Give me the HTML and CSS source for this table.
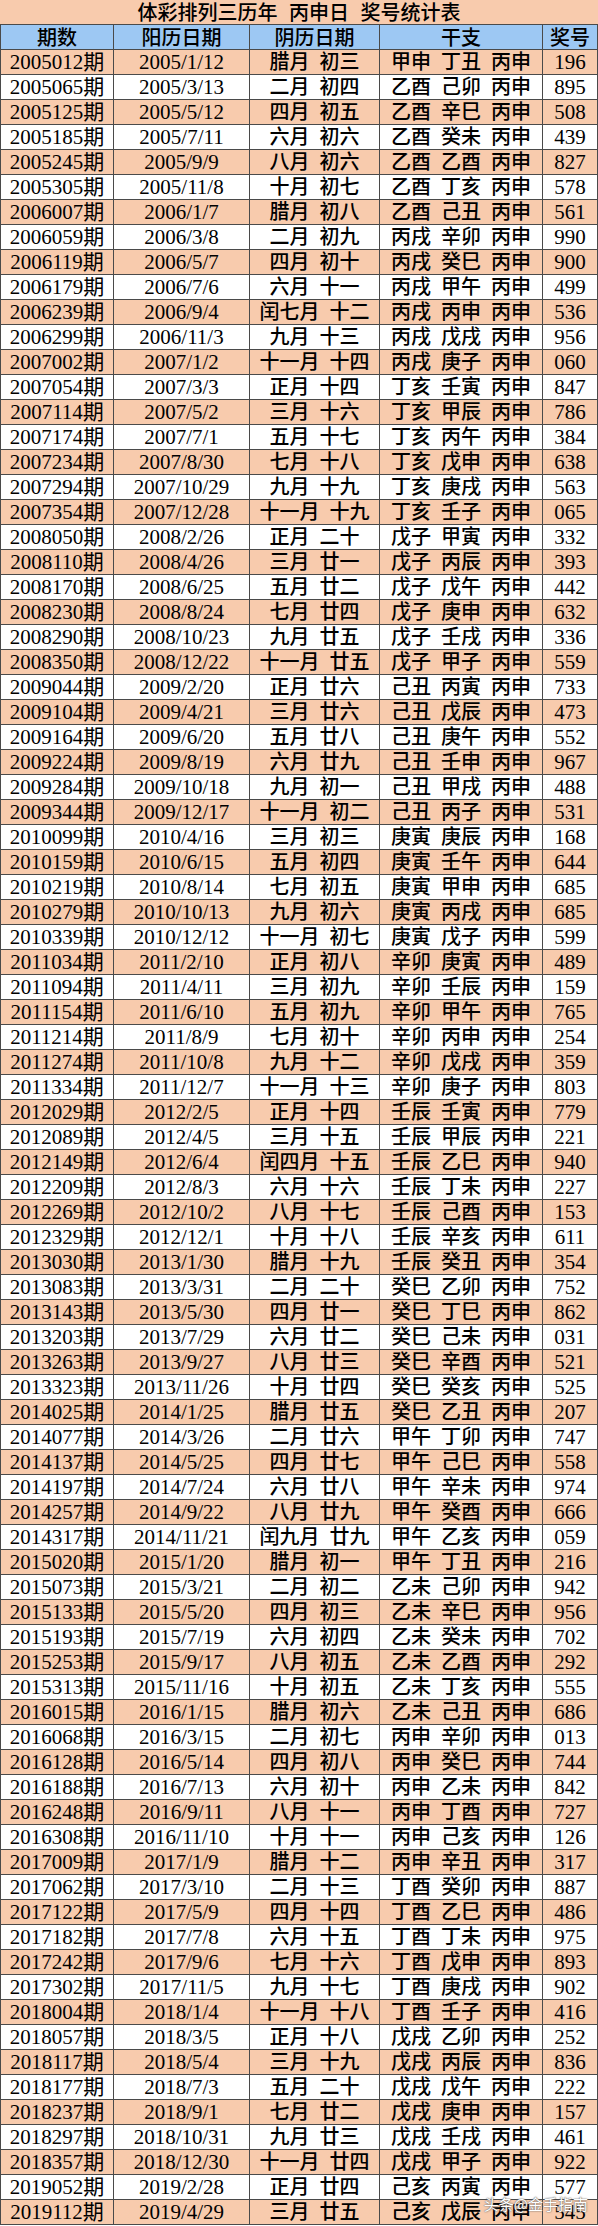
FILE: index.html
```html
<!DOCTYPE html>
<html lang="zh-CN">
<head>
<meta charset="utf-8">
<title>体彩排列三历年 丙申日 奖号统计表</title>
<link rel="stylesheet" href="styles.css">
</head>
<body>
<div class="sheet">
  <div class="title">体彩排列三历年 丙申日 奖号统计表</div>
  <div class="row head"><div class="c">期数</div><div class="c">阳历日期</div><div class="c">阴历日期</div><div class="c">干支</div><div class="c">奖号</div></div>
  <div class="row odd"><div class="c n">2005012期</div><div class="c n">2005/1/12</div><div class="c z">腊月 初三</div><div class="c z">甲申 丁丑 丙申</div><div class="c n">196</div></div>
  <div class="row"><div class="c n">2005065期</div><div class="c n">2005/3/13</div><div class="c z">二月 初四</div><div class="c z">乙酉 己卯 丙申</div><div class="c n">895</div></div>
  <div class="row odd"><div class="c n">2005125期</div><div class="c n">2005/5/12</div><div class="c z">四月 初五</div><div class="c z">乙酉 辛巳 丙申</div><div class="c n">508</div></div>
  <div class="row"><div class="c n">2005185期</div><div class="c n">2005/7/11</div><div class="c z">六月 初六</div><div class="c z">乙酉 癸未 丙申</div><div class="c n">439</div></div>
  <div class="row odd"><div class="c n">2005245期</div><div class="c n">2005/9/9</div><div class="c z">八月 初六</div><div class="c z">乙酉 乙酉 丙申</div><div class="c n">827</div></div>
  <div class="row"><div class="c n">2005305期</div><div class="c n">2005/11/8</div><div class="c z">十月 初七</div><div class="c z">乙酉 丁亥 丙申</div><div class="c n">578</div></div>
  <div class="row odd"><div class="c n">2006007期</div><div class="c n">2006/1/7</div><div class="c z">腊月 初八</div><div class="c z">乙酉 己丑 丙申</div><div class="c n">561</div></div>
  <div class="row"><div class="c n">2006059期</div><div class="c n">2006/3/8</div><div class="c z">二月 初九</div><div class="c z">丙戌 辛卯 丙申</div><div class="c n">990</div></div>
  <div class="row odd"><div class="c n">2006119期</div><div class="c n">2006/5/7</div><div class="c z">四月 初十</div><div class="c z">丙戌 癸巳 丙申</div><div class="c n">900</div></div>
  <div class="row"><div class="c n">2006179期</div><div class="c n">2006/7/6</div><div class="c z">六月 十一</div><div class="c z">丙戌 甲午 丙申</div><div class="c n">499</div></div>
  <div class="row odd"><div class="c n">2006239期</div><div class="c n">2006/9/4</div><div class="c z">闰七月 十二</div><div class="c z">丙戌 丙申 丙申</div><div class="c n">536</div></div>
  <div class="row"><div class="c n">2006299期</div><div class="c n">2006/11/3</div><div class="c z">九月 十三</div><div class="c z">丙戌 戊戌 丙申</div><div class="c n">956</div></div>
  <div class="row odd"><div class="c n">2007002期</div><div class="c n">2007/1/2</div><div class="c z">十一月 十四</div><div class="c z">丙戌 庚子 丙申</div><div class="c n">060</div></div>
  <div class="row"><div class="c n">2007054期</div><div class="c n">2007/3/3</div><div class="c z">正月 十四</div><div class="c z">丁亥 壬寅 丙申</div><div class="c n">847</div></div>
  <div class="row odd"><div class="c n">2007114期</div><div class="c n">2007/5/2</div><div class="c z">三月 十六</div><div class="c z">丁亥 甲辰 丙申</div><div class="c n">786</div></div>
  <div class="row"><div class="c n">2007174期</div><div class="c n">2007/7/1</div><div class="c z">五月 十七</div><div class="c z">丁亥 丙午 丙申</div><div class="c n">384</div></div>
  <div class="row odd"><div class="c n">2007234期</div><div class="c n">2007/8/30</div><div class="c z">七月 十八</div><div class="c z">丁亥 戊申 丙申</div><div class="c n">638</div></div>
  <div class="row"><div class="c n">2007294期</div><div class="c n">2007/10/29</div><div class="c z">九月 十九</div><div class="c z">丁亥 庚戌 丙申</div><div class="c n">563</div></div>
  <div class="row odd"><div class="c n">2007354期</div><div class="c n">2007/12/28</div><div class="c z">十一月 十九</div><div class="c z">丁亥 壬子 丙申</div><div class="c n">065</div></div>
  <div class="row"><div class="c n">2008050期</div><div class="c n">2008/2/26</div><div class="c z">正月 二十</div><div class="c z">戊子 甲寅 丙申</div><div class="c n">332</div></div>
  <div class="row odd"><div class="c n">2008110期</div><div class="c n">2008/4/26</div><div class="c z">三月 廿一</div><div class="c z">戊子 丙辰 丙申</div><div class="c n">393</div></div>
  <div class="row"><div class="c n">2008170期</div><div class="c n">2008/6/25</div><div class="c z">五月 廿二</div><div class="c z">戊子 戊午 丙申</div><div class="c n">442</div></div>
  <div class="row odd"><div class="c n">2008230期</div><div class="c n">2008/8/24</div><div class="c z">七月 廿四</div><div class="c z">戊子 庚申 丙申</div><div class="c n">632</div></div>
  <div class="row"><div class="c n">2008290期</div><div class="c n">2008/10/23</div><div class="c z">九月 廿五</div><div class="c z">戊子 壬戌 丙申</div><div class="c n">336</div></div>
  <div class="row odd"><div class="c n">2008350期</div><div class="c n">2008/12/22</div><div class="c z">十一月 廿五</div><div class="c z">戊子 甲子 丙申</div><div class="c n">559</div></div>
  <div class="row"><div class="c n">2009044期</div><div class="c n">2009/2/20</div><div class="c z">正月 廿六</div><div class="c z">己丑 丙寅 丙申</div><div class="c n">733</div></div>
  <div class="row odd"><div class="c n">2009104期</div><div class="c n">2009/4/21</div><div class="c z">三月 廿六</div><div class="c z">己丑 戊辰 丙申</div><div class="c n">473</div></div>
  <div class="row"><div class="c n">2009164期</div><div class="c n">2009/6/20</div><div class="c z">五月 廿八</div><div class="c z">己丑 庚午 丙申</div><div class="c n">552</div></div>
  <div class="row odd"><div class="c n">2009224期</div><div class="c n">2009/8/19</div><div class="c z">六月 廿九</div><div class="c z">己丑 壬申 丙申</div><div class="c n">967</div></div>
  <div class="row"><div class="c n">2009284期</div><div class="c n">2009/10/18</div><div class="c z">九月 初一</div><div class="c z">己丑 甲戌 丙申</div><div class="c n">488</div></div>
  <div class="row odd"><div class="c n">2009344期</div><div class="c n">2009/12/17</div><div class="c z">十一月 初二</div><div class="c z">己丑 丙子 丙申</div><div class="c n">531</div></div>
  <div class="row"><div class="c n">2010099期</div><div class="c n">2010/4/16</div><div class="c z">三月 初三</div><div class="c z">庚寅 庚辰 丙申</div><div class="c n">168</div></div>
  <div class="row odd"><div class="c n">2010159期</div><div class="c n">2010/6/15</div><div class="c z">五月 初四</div><div class="c z">庚寅 壬午 丙申</div><div class="c n">644</div></div>
  <div class="row"><div class="c n">2010219期</div><div class="c n">2010/8/14</div><div class="c z">七月 初五</div><div class="c z">庚寅 甲申 丙申</div><div class="c n">685</div></div>
  <div class="row odd"><div class="c n">2010279期</div><div class="c n">2010/10/13</div><div class="c z">九月 初六</div><div class="c z">庚寅 丙戌 丙申</div><div class="c n">685</div></div>
  <div class="row"><div class="c n">2010339期</div><div class="c n">2010/12/12</div><div class="c z">十一月 初七</div><div class="c z">庚寅 戊子 丙申</div><div class="c n">599</div></div>
  <div class="row odd"><div class="c n">2011034期</div><div class="c n">2011/2/10</div><div class="c z">正月 初八</div><div class="c z">辛卯 庚寅 丙申</div><div class="c n">489</div></div>
  <div class="row"><div class="c n">2011094期</div><div class="c n">2011/4/11</div><div class="c z">三月 初九</div><div class="c z">辛卯 壬辰 丙申</div><div class="c n">159</div></div>
  <div class="row odd"><div class="c n">2011154期</div><div class="c n">2011/6/10</div><div class="c z">五月 初九</div><div class="c z">辛卯 甲午 丙申</div><div class="c n">765</div></div>
  <div class="row"><div class="c n">2011214期</div><div class="c n">2011/8/9</div><div class="c z">七月 初十</div><div class="c z">辛卯 丙申 丙申</div><div class="c n">254</div></div>
  <div class="row odd"><div class="c n">2011274期</div><div class="c n">2011/10/8</div><div class="c z">九月 十二</div><div class="c z">辛卯 戊戌 丙申</div><div class="c n">359</div></div>
  <div class="row"><div class="c n">2011334期</div><div class="c n">2011/12/7</div><div class="c z">十一月 十三</div><div class="c z">辛卯 庚子 丙申</div><div class="c n">803</div></div>
  <div class="row odd"><div class="c n">2012029期</div><div class="c n">2012/2/5</div><div class="c z">正月 十四</div><div class="c z">壬辰 壬寅 丙申</div><div class="c n">779</div></div>
  <div class="row"><div class="c n">2012089期</div><div class="c n">2012/4/5</div><div class="c z">三月 十五</div><div class="c z">壬辰 甲辰 丙申</div><div class="c n">221</div></div>
  <div class="row odd"><div class="c n">2012149期</div><div class="c n">2012/6/4</div><div class="c z">闰四月 十五</div><div class="c z">壬辰 乙巳 丙申</div><div class="c n">940</div></div>
  <div class="row"><div class="c n">2012209期</div><div class="c n">2012/8/3</div><div class="c z">六月 十六</div><div class="c z">壬辰 丁未 丙申</div><div class="c n">227</div></div>
  <div class="row odd"><div class="c n">2012269期</div><div class="c n">2012/10/2</div><div class="c z">八月 十七</div><div class="c z">壬辰 己酉 丙申</div><div class="c n">153</div></div>
  <div class="row"><div class="c n">2012329期</div><div class="c n">2012/12/1</div><div class="c z">十月 十八</div><div class="c z">壬辰 辛亥 丙申</div><div class="c n">611</div></div>
  <div class="row odd"><div class="c n">2013030期</div><div class="c n">2013/1/30</div><div class="c z">腊月 十九</div><div class="c z">壬辰 癸丑 丙申</div><div class="c n">354</div></div>
  <div class="row"><div class="c n">2013083期</div><div class="c n">2013/3/31</div><div class="c z">二月 二十</div><div class="c z">癸巳 乙卯 丙申</div><div class="c n">752</div></div>
  <div class="row odd"><div class="c n">2013143期</div><div class="c n">2013/5/30</div><div class="c z">四月 廿一</div><div class="c z">癸巳 丁巳 丙申</div><div class="c n">862</div></div>
  <div class="row"><div class="c n">2013203期</div><div class="c n">2013/7/29</div><div class="c z">六月 廿二</div><div class="c z">癸巳 己未 丙申</div><div class="c n">031</div></div>
  <div class="row odd"><div class="c n">2013263期</div><div class="c n">2013/9/27</div><div class="c z">八月 廿三</div><div class="c z">癸巳 辛酉 丙申</div><div class="c n">521</div></div>
  <div class="row"><div class="c n">2013323期</div><div class="c n">2013/11/26</div><div class="c z">十月 廿四</div><div class="c z">癸巳 癸亥 丙申</div><div class="c n">525</div></div>
  <div class="row odd"><div class="c n">2014025期</div><div class="c n">2014/1/25</div><div class="c z">腊月 廿五</div><div class="c z">癸巳 乙丑 丙申</div><div class="c n">207</div></div>
  <div class="row"><div class="c n">2014077期</div><div class="c n">2014/3/26</div><div class="c z">二月 廿六</div><div class="c z">甲午 丁卯 丙申</div><div class="c n">747</div></div>
  <div class="row odd"><div class="c n">2014137期</div><div class="c n">2014/5/25</div><div class="c z">四月 廿七</div><div class="c z">甲午 己巳 丙申</div><div class="c n">558</div></div>
  <div class="row"><div class="c n">2014197期</div><div class="c n">2014/7/24</div><div class="c z">六月 廿八</div><div class="c z">甲午 辛未 丙申</div><div class="c n">974</div></div>
  <div class="row odd"><div class="c n">2014257期</div><div class="c n">2014/9/22</div><div class="c z">八月 廿九</div><div class="c z">甲午 癸酉 丙申</div><div class="c n">666</div></div>
  <div class="row"><div class="c n">2014317期</div><div class="c n">2014/11/21</div><div class="c z">闰九月 廿九</div><div class="c z">甲午 乙亥 丙申</div><div class="c n">059</div></div>
  <div class="row odd"><div class="c n">2015020期</div><div class="c n">2015/1/20</div><div class="c z">腊月 初一</div><div class="c z">甲午 丁丑 丙申</div><div class="c n">216</div></div>
  <div class="row"><div class="c n">2015073期</div><div class="c n">2015/3/21</div><div class="c z">二月 初二</div><div class="c z">乙未 己卯 丙申</div><div class="c n">942</div></div>
  <div class="row odd"><div class="c n">2015133期</div><div class="c n">2015/5/20</div><div class="c z">四月 初三</div><div class="c z">乙未 辛巳 丙申</div><div class="c n">956</div></div>
  <div class="row"><div class="c n">2015193期</div><div class="c n">2015/7/19</div><div class="c z">六月 初四</div><div class="c z">乙未 癸未 丙申</div><div class="c n">702</div></div>
  <div class="row odd"><div class="c n">2015253期</div><div class="c n">2015/9/17</div><div class="c z">八月 初五</div><div class="c z">乙未 乙酉 丙申</div><div class="c n">292</div></div>
  <div class="row"><div class="c n">2015313期</div><div class="c n">2015/11/16</div><div class="c z">十月 初五</div><div class="c z">乙未 丁亥 丙申</div><div class="c n">555</div></div>
  <div class="row odd"><div class="c n">2016015期</div><div class="c n">2016/1/15</div><div class="c z">腊月 初六</div><div class="c z">乙未 己丑 丙申</div><div class="c n">686</div></div>
  <div class="row"><div class="c n">2016068期</div><div class="c n">2016/3/15</div><div class="c z">二月 初七</div><div class="c z">丙申 辛卯 丙申</div><div class="c n">013</div></div>
  <div class="row odd"><div class="c n">2016128期</div><div class="c n">2016/5/14</div><div class="c z">四月 初八</div><div class="c z">丙申 癸巳 丙申</div><div class="c n">744</div></div>
  <div class="row"><div class="c n">2016188期</div><div class="c n">2016/7/13</div><div class="c z">六月 初十</div><div class="c z">丙申 乙未 丙申</div><div class="c n">842</div></div>
  <div class="row odd"><div class="c n">2016248期</div><div class="c n">2016/9/11</div><div class="c z">八月 十一</div><div class="c z">丙申 丁酉 丙申</div><div class="c n">727</div></div>
  <div class="row"><div class="c n">2016308期</div><div class="c n">2016/11/10</div><div class="c z">十月 十一</div><div class="c z">丙申 己亥 丙申</div><div class="c n">126</div></div>
  <div class="row odd"><div class="c n">2017009期</div><div class="c n">2017/1/9</div><div class="c z">腊月 十二</div><div class="c z">丙申 辛丑 丙申</div><div class="c n">317</div></div>
  <div class="row"><div class="c n">2017062期</div><div class="c n">2017/3/10</div><div class="c z">二月 十三</div><div class="c z">丁酉 癸卯 丙申</div><div class="c n">887</div></div>
  <div class="row odd"><div class="c n">2017122期</div><div class="c n">2017/5/9</div><div class="c z">四月 十四</div><div class="c z">丁酉 乙巳 丙申</div><div class="c n">486</div></div>
  <div class="row"><div class="c n">2017182期</div><div class="c n">2017/7/8</div><div class="c z">六月 十五</div><div class="c z">丁酉 丁未 丙申</div><div class="c n">975</div></div>
  <div class="row odd"><div class="c n">2017242期</div><div class="c n">2017/9/6</div><div class="c z">七月 十六</div><div class="c z">丁酉 戊申 丙申</div><div class="c n">893</div></div>
  <div class="row"><div class="c n">2017302期</div><div class="c n">2017/11/5</div><div class="c z">九月 十七</div><div class="c z">丁酉 庚戌 丙申</div><div class="c n">902</div></div>
  <div class="row odd"><div class="c n">2018004期</div><div class="c n">2018/1/4</div><div class="c z">十一月 十八</div><div class="c z">丁酉 壬子 丙申</div><div class="c n">416</div></div>
  <div class="row"><div class="c n">2018057期</div><div class="c n">2018/3/5</div><div class="c z">正月 十八</div><div class="c z">戊戌 乙卯 丙申</div><div class="c n">252</div></div>
  <div class="row odd"><div class="c n">2018117期</div><div class="c n">2018/5/4</div><div class="c z">三月 十九</div><div class="c z">戊戌 丙辰 丙申</div><div class="c n">836</div></div>
  <div class="row"><div class="c n">2018177期</div><div class="c n">2018/7/3</div><div class="c z">五月 二十</div><div class="c z">戊戌 戊午 丙申</div><div class="c n">222</div></div>
  <div class="row odd"><div class="c n">2018237期</div><div class="c n">2018/9/1</div><div class="c z">七月 廿二</div><div class="c z">戊戌 庚申 丙申</div><div class="c n">157</div></div>
  <div class="row"><div class="c n">2018297期</div><div class="c n">2018/10/31</div><div class="c z">九月 廿三</div><div class="c z">戊戌 壬戌 丙申</div><div class="c n">461</div></div>
  <div class="row odd"><div class="c n">2018357期</div><div class="c n">2018/12/30</div><div class="c z">十一月 廿四</div><div class="c z">戊戌 甲子 丙申</div><div class="c n">922</div></div>
  <div class="row"><div class="c n">2019052期</div><div class="c n">2019/2/28</div><div class="c z">正月 廿四</div><div class="c z">己亥 丙寅 丙申</div><div class="c n">577</div></div>
  <div class="row odd"><div class="c n">2019112期</div><div class="c n">2019/4/29</div><div class="c z">三月 廿五</div><div class="c z">己亥 戊辰 丙申</div><div class="c n">545</div></div>
  <div class="mark">头条@金手指南</div>
</div>
</body>
</html>
```

FILE: styles.css
```css
html, body {
  margin: 0;
  padding: 0;
  background: #ffffff;
}

.sheet {
  position: relative;
  width: 598px;
  font-family: "Liberation Serif", "Noto Sans CJK SC", serif;
  color: #000000;
}

.title {
  box-sizing: border-box;
  height: 25px;
  line-height: 24px;
  background: #f8cbad;
  border-bottom: 1px solid #4a4a4a;
  text-align: center;
  font-family: "Noto Sans CJK SC", sans-serif;
  font-size: 20px;
  font-weight: 500;
  word-spacing: 7px;
}

.row {
  box-sizing: border-box;
  display: grid;
  grid-template-columns: 113px 136px 130px 163px 55px;
  height: 25px;
  border-left: 1px solid #4a4a4a;
  border-bottom: 1px solid #4a4a4a;
  background: #ffffff;
}

.row.odd {
  background: #f8cbad;
}

.row.head {
  background: #9dc8f3;
}

.c {
  box-sizing: border-box;
  border-right: 1px solid #4a4a4a;
  text-align: center;
  white-space: nowrap;
  line-height: 24px;
  font-size: 20px;
}

.head .c {
  font-family: "Noto Sans CJK SC", sans-serif;
  font-size: 20px;
  font-weight: 500;
}

.c.n {
  font-size: 21px;
}

.c.z {
  font-size: 20px;
  font-weight: 500;
  word-spacing: 5px;
}

.mark {
  position: absolute;
  right: 10px;
  bottom: 12px;
  font-family: "Noto Sans CJK SC", sans-serif;
  font-size: 15px;
  line-height: 18px;
  color: #ffffff;
  text-shadow: 0 0 1px #555555, 0 0 2px #777777;
}
```
